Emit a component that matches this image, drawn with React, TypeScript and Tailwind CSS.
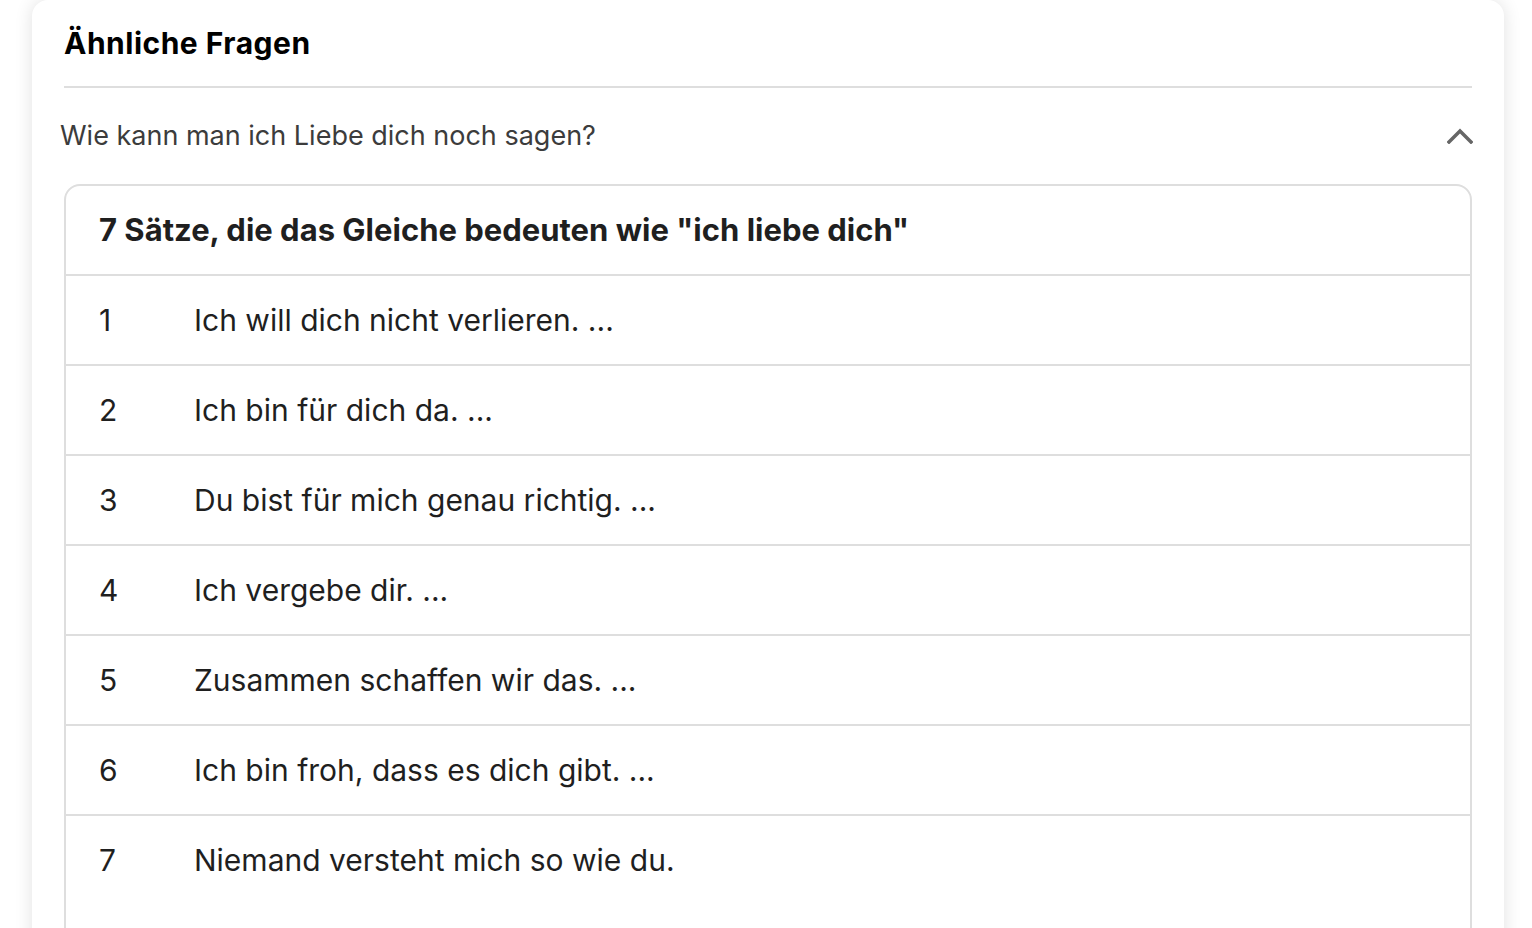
const rows = [
  "Ich will dich nicht verlieren. ...",
  "Ich bin für dich da. ...",
  "Du bist für mich genau richtig. ...",
  "Ich vergebe dir. ...",
  "Zusammen schaffen wir das. ...",
  "Ich bin froh, dass es dich gibt. ...",
  "Niemand versteht mich so wie du.",
];

function Chevron() {
  return (
    <svg width="26" height="16" viewBox="0 0 26 16" className="-mr-[1px]">
      <polyline
        points="2,14 13,3 24,14"
        fill="none"
        stroke="#666"
        strokeWidth="3.5"
        strokeLinecap="square"
      />
    </svg>
  );
}

export default function App() {
  return (
    <div
      className="h-[928px] overflow-hidden bg-white pl-[32px] pt-0"
      style={{ fontFamily: "Inter, 'Noto Sans', sans-serif" }}
    >
      <div className="h-[980px] w-[1472px] rounded-t-[16px] bg-white px-[32px] pt-[22px] shadow-[0_0_18px_rgba(0,0,0,0.12)]">
        <h2 className="h-[42px] text-[30px] font-bold leading-[42px] tracking-[0.5px] text-black">
          Ähnliche Fragen
        </h2>
        <div className="mt-[22px] h-[2px] bg-[#dedede]" />
        <div className="flex h-[96px] items-center justify-between">
          <span className="-ml-[4px] text-[27px] text-[#3c3c3c]">
            Wie kann man ich Liebe dich noch sagen?
          </span>
          <Chevron />
        </div>
        <div className="overflow-hidden rounded-t-[16px] border-2 border-[#dedede] text-[#1f1f1f]">
          <div className="flex h-[88px] items-center px-[33px] text-[31px] font-bold">
            7 Sätze, die das Gleiche bedeuten wie "ich liebe dich"
          </div>
          {rows.map((r, i) => (
            <div
              key={i}
              className={`flex h-[90px] items-center border-t-2 border-[#dedede] text-[30px] ${
                i === rows.length - 1 ? "mb-[60px]" : ""
              }`}
            >
              <span className="w-[128px] pl-[33px]">{i + 1}</span>
              <span>{r}</span>
            </div>
          ))}
        </div>
      </div>
    </div>
  );
}
